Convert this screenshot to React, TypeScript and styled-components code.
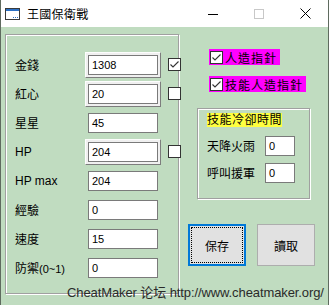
import React from 'react';
import styled, {createGlobalStyle} from 'styled-components';

const Global = createGlobalStyle`
  html, body { margin: 0; padding: 0; overflow: hidden; }
  body { font-family: "Liberation Sans", "Noto Sans CJK TC", sans-serif; }
`;

const CJK = `"Liberation Sans", "Noto Sans CJK TC", sans-serif`;

const Window = styled.div`
  position: relative;
  width: 329px; height: 305px;
  box-sizing: border-box;
  border-left: 1px solid #5f6b5f;
  border-right: 1px solid #5f6b5f;
  display: flex; flex-direction: column;
  background: #c0dcc0;
`;

const TitleBar = styled.div`
  height: 27px;
  background: #fff;
  display: flex; align-items: center;
  flex-shrink: 0;
`;

const Title = styled.div`
  margin-left: 7px;
  font: 12px ${CJK};
  color: #000;
  letter-spacing: 0.3px;
  flex: 1;
`;

const Ctrl = styled.div`
  width: 46px; height: 27px;
  display: flex; align-items: center; justify-content: center;
`;

const Body = styled.div`
  flex: 1;
  display: flex;
  align-items: flex-start;
`;

const Group = styled.div`
  box-sizing: border-box;
  margin: 7px 0 0 4px;
  width: 174px; height: 260px;
  border: 1px solid #a0a0a0;
  box-shadow: inset 1px 1px 0 #fff, 1px 1px 0 #fff;
  padding: 15px 0 0 9px;
`;

const Row = styled.div`
  display: grid;
  grid-template-columns: 63px 70px auto;
  column-gap: 10px;
  align-items: center;
  height: 29px;
`;

const Label = styled.div`
  font: 12px ${CJK};
  color: #000;
  white-space: nowrap;
  span { font-size: 11px; }
`;

const Field = styled.div<{$w?: number}>`
  box-sizing: border-box;
  width: ${p => p.$w || 70}px; height: 20px;
  background: #fff;
  border: 1px solid #7a7a7a;
  padding: 0 0 0 3px;
  font: 11px "Liberation Sans", sans-serif;
  line-height: 18px;
  color: #000;
  text-align: left;
`;

const Bevel = styled.div`
  margin: -3px;
  padding: 2px;
  border: 1px solid;
  border-color: #fdfdfd #7d7d7d #7d7d7d #fdfdfd;
  background: #f0f0f0;
`;

const Box = styled.div`
  box-sizing: border-box;
  width: 13px; height: 13px;
  background: #fff;
  border: 1px solid #333;
  display: flex; align-items: center; justify-content: center;
`;

const Right = styled.div`
  margin-left: 9px;
  padding-top: 22px;
  display: flex; flex-direction: column; align-items: flex-start;
`;

const Flag = styled.div`
  margin-left: 21px;
  height: 16px;
  background: #ff00ff;
  display: flex; align-items: center;
  padding: 0 3px 0 1px;
  gap: 2px;
  font: 12px ${CJK};
  letter-spacing: 1px;
  color: #000;
  & + & { margin-top: 11px; }
`;

const SkillGroup = styled.div`
  box-sizing: border-box;
  margin: 16px 0 0 9px;
  width: 113px; height: 91px;
  border: 1px solid #a0a0a0;
  box-shadow: inset 1px 1px 0 #fff, 1px 1px 0 #fff;
  padding: 1px 0 0 9px;
`;

const Caption = styled.div`
  display: inline-block;
  background: #ffff40;
  font: 12px ${CJK};
  line-height: 14px;
  letter-spacing: 0.5px;
  color: #000;
  margin-bottom: 5px;
`;

const SkillRow = styled.div`
  display: grid;
  grid-template-columns: 58px 30px;
  align-items: center;
  height: 27px;
`;

const Buttons = styled.div`
  margin-top: 25px;
  display: flex; gap: 11px;
`;

const Btn = styled.div<{$focus?: boolean}>`
  box-sizing: border-box;
  width: 58px; height: 42px;
  background: #e1e1e1;
  border: ${p => p.$focus ? '2px solid #0078d7' : '1px solid #adadad'};
  display: flex; align-items: center; justify-content: center;
  font: 12px ${CJK};
  color: #000;
  position: relative;
  &::after {
    content: '';
    display: ${p => p.$focus ? 'block' : 'none'};
    position: absolute; inset: 1px;
    border: 1px dotted #000;
  }
`;

const Footer = styled.div`
  position: absolute;
  left: 66px; top: 284px;
  font: 13px "Liberation Sans", "Noto Sans CJK SC", sans-serif;
  letter-spacing: -0.1px;
  line-height: 18px;
  color: #2a2a2a;
  white-space: nowrap;
`;

const Check = ({on}: {on?: boolean}) => (
  <Box>
    {on && <svg width="9" height="7" viewBox="0 0 9 7">
      <polyline points="0.5,3.5 3,6 8.5,0.5" fill="none" stroke="#333" strokeWidth="1.1"/>
    </svg>}
  </Box>
);

const stats: [React.ReactNode, string, boolean, boolean | null][] = [
  ['金錢', '1308', true, true],
  ['紅心', '20', true, false],
  ['星星', '45', false, null],
  ['HP', '204', true, false],
  ['HP max', '204', false, null],
  ['經驗', '0', false, null],
  ['速度', '15', false, null],
  [<>防禦<span>(0~1)</span></>, '0', false, null],
];

export default () => {
  return (<Window>
    <Global/>
    <TitleBar>
      <svg width="15" height="12" viewBox="0 0 15 12" style={{marginLeft: 4}}>
        <rect x="0.5" y="0.5" width="14" height="11" fill="#fff" stroke="#3a3a3a"/>
        <rect x="1" y="1" width="13" height="2" fill="#2b6fc4"/>
        <rect x="8" y="9" width="1" height="1" fill="#2b6fc4"/>
        <rect x="10" y="9" width="1" height="1" fill="#2b6fc4"/>
        <rect x="12" y="9" width="1" height="1" fill="#2b6fc4"/>
      </svg>
      <Title>王國保衛戰</Title>
      <Ctrl>
        <svg width="10" height="10" viewBox="0 0 10 10"><line x1="0" y1="5.5" x2="10" y2="5.5" stroke="#000"/></svg>
      </Ctrl>
      <Ctrl>
        <svg width="10" height="10" viewBox="0 0 10 10"><rect x="0.5" y="0.5" width="9" height="9" fill="none" stroke="#c8c8c8"/></svg>
      </Ctrl>
      <Ctrl>
        <svg width="11" height="11" viewBox="0 0 11 11"><path d="M0.5 0.5 L10.5 10.5 M10.5 0.5 L0.5 10.5" stroke="#000" strokeWidth="1"/></svg>
      </Ctrl>
    </TitleBar>
    <Body>
      <Group>
        {stats.map(([label, value, raised, check], i) => (
          <Row key={i}>
            <Label>{label}</Label>
            {raised ? <Bevel><Field>{value}</Field></Bevel> : <Field>{value}</Field>}
            {check !== null && <Check on={check}/>}
          </Row>
        ))}
      </Group>
      <Right>
        <Flag><Check on/>人造指針</Flag>
        <Flag><Check on/>技能人造指針</Flag>
        <SkillGroup>
          <Caption>技能冷卻時間</Caption>
          <SkillRow><Label>天降火雨</Label><Field $w={30}>0</Field></SkillRow>
          <SkillRow><Label>呼叫援軍</Label><Field $w={30}>0</Field></SkillRow>
        </SkillGroup>
        <Buttons>
          <Btn $focus>保存</Btn>
          <Btn>讀取</Btn>
        </Buttons>
      </Right>
    </Body>
    <Footer>CheatMaker 论坛 http://www.cheatmaker.org/</Footer>
  </Window>);
}
